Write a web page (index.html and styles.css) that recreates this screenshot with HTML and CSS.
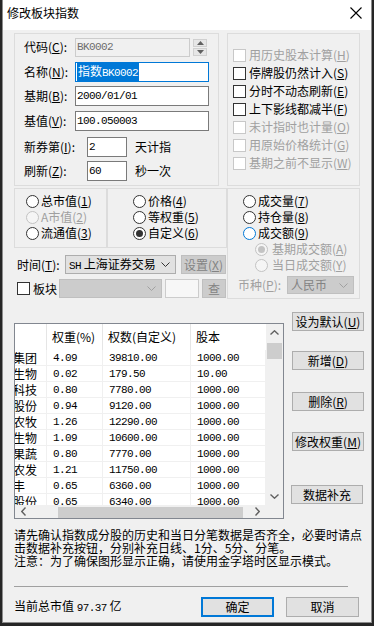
FILE: index.html
```html
<!DOCTYPE html>
<html lang="zh">
<head>
<meta charset="utf-8">
<title>修改板块指数</title>
<link rel="stylesheet" href="styles.css">
</head>
<body>
<div class="dialog">
  <div class="titlebar">
    <span class="title">修改板块指数</span>
    <svg class="close" width="12" height="12" viewBox="0 0 12 12"><path d="M0.5 0.5L11.5 11.5M11.5 0.5L0.5 11.5" stroke="#000" stroke-width="1.1" fill="none"/></svg>
  </div>
  <div class="content">
    <div class="row1">
      <div class="group gl">
        <div class="frow">
          <span class="lbl lw51">代码(<u>C</u>):</span>
          <span class="edit disabled mono ew115">BK0002</span>
          <span class="spin">
            <span class="spin-btn"><svg width="7" height="4" viewBox="0 0 7 4"><path d="M0 4L3.5 0L7 4Z" fill="#606060"/></svg></span>
            <span class="spin-btn"><svg width="7" height="4" viewBox="0 0 7 4"><path d="M0 0L3.5 4L7 0Z" fill="#606060"/></svg></span>
          </span>
        </div>
        <div class="frow m5">
          <span class="lbl lw51">名称(<u>N</u>):</span>
          <span class="edit focus ew134"><span class="sel">指数<span class="mono">BK0002</span></span></span>
        </div>
        <div class="frow m4">
          <span class="lbl lw51">基期(<u>B</u>):</span>
          <span class="edit mono ew134">2000/01/01</span>
        </div>
        <div class="frow m5">
          <span class="lbl lw51">基值(<u>V</u>):</span>
          <span class="edit mono ew134">100.050003</span>
        </div>
        <div class="frow m6">
          <span class="lbl lw63">新券第(<u>I</u>):</span>
          <span class="edit mono ew40">2</span>
          <span class="suffix">天计指</span>
        </div>
        <div class="frow m4">
          <span class="lbl lw63">刷新(<u>Z</u>):</span>
          <span class="edit mono ew40">60</span>
          <span class="suffix">秒一次</span>
        </div>
      </div>
      <div class="group gr">
        <div class="chk dis"><span class="box"></span><span>用历史股本计算(<u>H</u>)</span></div>
        <div class="chk"><span class="box"></span><span>停牌股仍然计入(<u>S</u>)</span></div>
        <div class="chk"><span class="box"></span><span>分时不动态刷新(<u>E</u>)</span></div>
        <div class="chk"><span class="box"></span><span>上下影线都减半(<u>F</u>)</span></div>
        <div class="chk dis"><span class="box"></span><span>未计指时也计量(<u>O</u>)</span></div>
        <div class="chk dis"><span class="box"></span><span>用原始价格统计(<u>G</u>)</span></div>
        <div class="chk dis"><span class="box"></span><span>基期之前不显示(<u>W</u>)</span></div>
      </div>
    </div>

    <div class="row2">
      <div class="left2">
        <div class="grp-row">
          <div class="group g1">
            <div class="rad"><span class="dot"></span><span>总市值(<u>1</u>)</span></div>
            <div class="rad dis"><span class="dot"></span><span>A市值(<u>2</u>)</span></div>
            <div class="rad"><span class="dot"></span><span>流通值(<u>3</u>)</span></div>
          </div>
          <div class="group g2">
            <div class="rad"><span class="dot"></span><span>价格(<u>4</u>)</span></div>
            <div class="rad"><span class="dot"></span><span>等权重(<u>5</u>)</span></div>
            <div class="rad on"><span class="dot"></span><span>自定义(<u>6</u>)</span></div>
          </div>
        </div>
        <div class="trow t-time">
          <span class="lbl lw48">时间(<u>T</u>):</span>
          <span class="combo cw111"><span class="ctext"><span class="mono">SH</span> 上海证券交易</span><svg class="chev" width="9" height="5" viewBox="0 0 9 5"><path d="M0.5 0.5L4.5 4.5L8.5 0.5" stroke="#333" fill="none"/></svg></span>
          <span class="btn btn-dis bw45">设置(<u>X</u>)</span>
        </div>
        <div class="trow t-block">
          <span class="box"></span>
          <span class="blk-lbl">板块</span>
          <span class="combo combo-dis cw103"><span class="ctext"></span><svg class="chev" width="9" height="5" viewBox="0 0 9 5"><path d="M0.5 0.5L4.5 4.5L8.5 0.5" stroke="#a0a0a0" fill="none"/></svg></span>
          <span class="edit edit-dis ew34"></span>
          <span class="btn btn-dis bw24">查</span>
        </div>
      </div>
      <div class="group g3">
        <div class="rad"><span class="dot"></span><span>成交量(<u>7</u>)</span></div>
        <div class="rad"><span class="dot"></span><span>持仓量(<u>8</u>)</span></div>
        <div class="rad hot"><span class="dot"></span><span>成交额(<u>9</u>)</span></div>
        <div class="rad sub dis on"><span class="dot"></span><span>基期成交额(<u>A</u>)</span></div>
        <div class="rad sub dis"><span class="dot"></span><span>当日成交额(<u>Y</u>)</span></div>
        <div class="cur-row">
          <span class="cur-lbl">币种(<u>P</u>):</span>
          <span class="combo combo-dis cw67"><span class="ctext">人民币</span><svg class="chev" width="9" height="5" viewBox="0 0 9 5"><path d="M0.5 0.5L4.5 4.5L8.5 0.5" stroke="#a0a0a0" fill="none"/></svg></span>
        </div>
      </div>
    </div>

    <div class="row3">
      <div class="list">
        <div class="viewport">
          <div class="lhead">
            <span class="c0"></span>
            <span class="c1">权重(%)</span>
            <span class="c2">权数(自定义)</span>
            <span class="c3">股本</span>
          </div>
          <div class="lrow"><span class="c0"><i>集团</i></span><span class="c1 mono">4.09</span><span class="c2 mono">39810.00</span><span class="c3 mono">1000.00</span></div>
          <div class="lrow"><span class="c0"><i>生物</i></span><span class="c1 mono">0.02</span><span class="c2 mono">179.50</span><span class="c3 mono">10.00</span></div>
          <div class="lrow"><span class="c0"><i>科技</i></span><span class="c1 mono">0.80</span><span class="c2 mono">7780.00</span><span class="c3 mono">1000.00</span></div>
          <div class="lrow"><span class="c0"><i>股份</i></span><span class="c1 mono">0.94</span><span class="c2 mono">9120.00</span><span class="c3 mono">1000.00</span></div>
          <div class="lrow"><span class="c0"><i>农牧</i></span><span class="c1 mono">1.26</span><span class="c2 mono">12290.00</span><span class="c3 mono">1000.00</span></div>
          <div class="lrow"><span class="c0"><i>生物</i></span><span class="c1 mono">1.09</span><span class="c2 mono">10600.00</span><span class="c3 mono">1000.00</span></div>
          <div class="lrow"><span class="c0"><i>果蔬</i></span><span class="c1 mono">0.80</span><span class="c2 mono">7770.00</span><span class="c3 mono">1000.00</span></div>
          <div class="lrow"><span class="c0"><i>农发</i></span><span class="c1 mono">1.21</span><span class="c2 mono">11750.00</span><span class="c3 mono">1000.00</span></div>
          <div class="lrow"><span class="c0"><i>丰</i></span><span class="c1 mono">0.65</span><span class="c2 mono">6360.00</span><span class="c3 mono">1000.00</span></div>
          <div class="lrow"><span class="c0"><i>股份</i></span><span class="c1 mono">0.65</span><span class="c2 mono">6340.00</span><span class="c3 mono">1000.00</span></div>
        </div>
        <div class="vscroll">
          <span class="arrow"><svg width="9" height="5" viewBox="0 0 9 5"><path d="M0.5 4.5L4.5 0.8L8.5 4.5" stroke="#606060" stroke-width="1.4" fill="none"/></svg></span>
          <span class="vthumb"></span>
          <span class="vspace"></span>
          <span class="arrow"><svg width="9" height="5" viewBox="0 0 9 5"><path d="M0.5 0.5L4.5 4.2L8.5 0.5" stroke="#606060" stroke-width="1.4" fill="none"/></svg></span>
        </div>
        <div class="hscroll">
          <span class="harrow"><svg width="5" height="9" viewBox="0 0 5 9"><path d="M4.5 0.5L0.8 4.5L4.5 8.5" stroke="#606060" stroke-width="1.4" fill="none"/></svg></span>
          <span class="hthumb"></span>
          <span class="harrow"><svg width="5" height="9" viewBox="0 0 5 9"><path d="M0.5 0.5L4.2 4.5L0.5 8.5" stroke="#606060" stroke-width="1.4" fill="none"/></svg></span>
        </div>
        <div class="corner"></div>
      </div>
      <div class="sidebtns">
        <span class="btn sb sb1">设为默认(<u>U</u>)</span>
        <span class="btn sb sb2">新增(<u>D</u>)</span>
        <span class="btn sb sb3">删除(<u>R</u>)</span>
        <span class="btn sb sb4">修改权重(<u>M</u>)</span>
        <span class="btn sb sb5">数据补充</span>
      </div>
    </div>

    <p class="note">请先确认指数成分股的历史和当日分笔数据是否齐全，必要时请点击数据补充按钮，分别补充日线、1分、5分、分笔。</p>
    <p class="note2">注意：为了确保图形显示正确，请使用金字塔时区显示模式。</p>

    <div class="sep"></div>

    <div class="bottom">
      <span class="total">当前总市值 <span class="mono">97.37</span> 亿</span>
      <span class="btn okbtn">确定</span>
      <span class="btn cbtn">取消</span>
    </div>
  </div>
</div>
</body>
</html>
```

FILE: styles.css
```css
html, body {
  margin: 0;
  padding: 0;
}
body {
  width: 374px;
  height: 626px;
  overflow: hidden;
  background: #262626;
  font-family: "Noto Sans CJK SC", "Noto Sans", sans-serif;
  font-size: 12px;
  color: #000;
}
u { text-decoration: underline; text-underline-offset: 1px; }
.mono {
  font-family: "Liberation Mono", "Noto Sans CJK SC", monospace;
  font-size: 11px;
  letter-spacing: -0.6px;
}
.dialog {
  margin-left: 2px;
  width: 370px;
  height: 623px;
  box-sizing: border-box;
  background: #f0f0f0;
  border: 1px solid #8c8c8c;
  border-top: none;
}
.titlebar {
  height: 30px;
  background: #fff;
  display: flex;
  align-items: center;
  padding: 0 8px 4px 4px;
  box-sizing: border-box;
}
.title { font-size: 12px; line-height: 14px; flex: 1; }
.close { display: block; margin-right: 1px; }

.content { padding-left: 11px; }

.group {
  border: 1px solid #dcdcdc;
  box-sizing: border-box;
}
.row1 {
  display: flex;
  margin-top: 3px;
}
.gl {
  width: 205px;
  height: 153px;
  padding: 3px 0 0 9px;
}
.gr {
  width: 133px;
  height: 153px;
  margin-left: 8px;
  padding: 12px 0 0 5px;
}
.frow {
  display: flex;
  align-items: center;
  height: 20px;
}
.m4 { margin-top: 4px; }
.m5 { margin-top: 5px; }
.m6 { margin-top: 6px; }
.lbl { display: inline-block; white-space: nowrap; line-height: 14px; }
.lw51 { width: 51px; }
.lw63 { width: 63px; }
.lw48 { width: 48px; }
.edit {
  display: flex;
  align-items: center;
  height: 20px;
  box-sizing: border-box;
  border: 1px solid #7a7a7a;
  background: #fff;
  padding-left: 1px;
  white-space: nowrap;
  overflow: hidden;
}
.edit.disabled {
  border-color: #cccccc;
  background: #f0f0f0;
  color: #6d6d6d;
  height: 19px;
}
.edit.focus { border-color: #0078d7; }
.sel {
  background: #0078d7;
  color: #fff;
  line-height: 15px;
  padding: 0 1px;
}
.ew115 { width: 115px; }
.ew134 { width: 134px; }
.ew40 { width: 40px; }
.ew34 { width: 34px; }
.suffix { margin-left: 8px; line-height: 14px; }
.spin {
  display: flex;
  flex-direction: column;
  margin-left: 3px;
  gap: 1px;
}
.spin-btn {
  width: 14px;
  height: 8px;
  background: #e6e6e6;
  border: 1px solid #d0d0d0;
  box-sizing: border-box;
  display: flex;
  align-items: center;
  justify-content: center;
}
.spin-btn svg { display: block; }

.chk {
  display: flex;
  align-items: center;
  height: 18px;
  gap: 3px;
  white-space: nowrap;
  line-height: 14px;
}
.box {
  width: 13px;
  height: 13px;
  flex: none;
  box-sizing: border-box;
  border: 1px solid #333;
  background: #fff;
}
.chk.dis { color: #a0a0a0; }
.chk.dis .box { border-color: #c8c8c8; }

.row2 {
  display: flex;
  margin-top: 2px;
}
.left2 { width: 213px; }
.grp-row { display: flex; }
.g1 {
  width: 93px;
  height: 60px;
  padding: 4px 0 0 11px;
}
.g2 {
  width: 120px;
  height: 60px;
  padding: 4px 0 0 25px;
}
.g3 {
  width: 133px;
  height: 111px;
  padding: 4px 0 0 15px;
}
.rad {
  display: flex;
  align-items: center;
  height: 16px;
  gap: 2px;
  white-space: nowrap;
  line-height: 14px;
}
.dot {
  width: 13px;
  height: 13px;
  flex: none;
  box-sizing: border-box;
  border: 1px solid #333;
  border-radius: 50%;
  background: #fff;
  display: flex;
  align-items: center;
  justify-content: center;
}
.rad.on .dot::after {
  content: "";
  width: 7px;
  height: 7px;
  border-radius: 50%;
  background: #333;
}
.rad.dis { color: #a0a0a0; }
.rad.dis .dot { border-color: #c3c3c3; background: #f5f5f5; }
.rad.dis.on .dot::after { background: #c3c3c3; }
.rad.hot .dot { border-color: #0078d7; }
.rad.sub { margin-left: 12px; gap: 4px; }
.cur-row {
  display: flex;
  align-items: center;
  margin: 3px 0 0 -5px;
  height: 18px;
}
.cur-lbl { color: #a0a0a0; width: 49px; white-space: nowrap; line-height: 14px; }

.trow {
  display: flex;
  align-items: center;
  height: 19px;
  padding-left: 3px;
}
.t-time { margin-top: 7px; }
.t-block { margin-top: 5px; }
.blk-lbl { margin: 0 2px 0 3px; width: 24px; line-height: 14px; }
.combo {
  display: flex;
  align-items: center;
  height: 19px;
  box-sizing: border-box;
  border: 1px solid #adadad;
  background: #e1e1e1;
  padding: 0 5px 0 3px;
  white-space: nowrap;
}
.combo .ctext { flex: 1; min-width: 0; line-height: 14px; white-space: nowrap; }
.chev { display: block; flex: none; }
.combo-dis {
  background: #cccccc;
  border-color: #bfbfbf;
  color: #838383;
}
.cw111 { width: 111px; }
.cw103 { width: 103px; }
.cw67 { width: 67px; height: 18px; }
.edit-dis {
  height: 19px;
  margin-left: 3px;
  border-color: #cccccc;
  background: #f7f7f7;
}

.btn {
  display: flex;
  align-items: center;
  justify-content: center;
  box-sizing: border-box;
  border: 1px solid #adadad;
  background: #e1e1e1;
  white-space: nowrap;
  line-height: 14px;
}
.btn-dis {
  background: #cccccc;
  border-color: #bfbfbf;
  color: #838383;
  height: 19px;
}
.bw45 { width: 45px; margin-left: 5px; }
.bw24 { width: 24px; margin-left: 3px; }

.row3 {
  display: flex;
  margin-top: 13px;
  height: 207px;
}
.list {
  margin-top: 11px;
  width: 270px;
  height: 196px;
  box-sizing: border-box;
  border: 1px solid #828790;
  background: #fff;
  display: grid;
  grid-template-columns: 251px 17px;
  grid-template-rows: 181px 13px;
}
.viewport {
  overflow: hidden;
  background: #fff;
}
.lhead, .lrow {
  display: flex;
  white-space: nowrap;
}
.lhead {
  height: 26px;
  align-items: center;
}
.lhead span {
  height: 26px;
  display: flex;
  align-items: center;
  box-sizing: border-box;
  border-right: 1px solid #e5e5e5;
  padding-left: 5px;
  line-height: 14px;
}
.lrow {
  height: 16px;
  align-items: center;
}
.lrow span {
  height: 16px;
  display: flex;
  align-items: center;
  box-sizing: border-box;
  border-right: 1px solid #f0f0f0;
  border-bottom: 1px solid #f0f0f0;
  padding-left: 6px;
  overflow: hidden;
  line-height: 14px;
}
.c0 { width: 32px; flex: none; }
.c1 { width: 56px; flex: none; }
.c2 { width: 88px; flex: none; }
.c3 { width: 75px; flex: none; }
.lhead .c3 { border-right: none; }
.lrow .c0 { padding-left: 0; }
.lrow .c0 i {
  font-style: normal;
  margin-left: -2px;
  line-height: 14px;
}
.vscroll {
  background: #f0f0f0;
  display: flex;
  flex-direction: column;
  align-items: center;
}
.arrow {
  height: 17px;
  width: 17px;
  display: flex;
  align-items: center;
  justify-content: center;
  flex: none;
}
.vthumb {
  width: 15px;
  height: 16px;
  margin-top: 2px;
  background: #cdcdcd;
  flex: none;
}
.vspace { flex: 1; }
.hscroll {
  background: #f0f0f0;
  display: flex;
  align-items: center;
}
.harrow {
  width: 17px;
  height: 13px;
  display: flex;
  align-items: center;
  justify-content: center;
  flex: none;
}
.hthumb {
  margin-left: 26px;
  width: 185px;
  height: 11px;
  margin-top: 2px;
  background: #cdcdcd;
}
.hscroll .harrow:last-child { margin-left: auto; }
.corner { background: #f0f0f0; }

.sidebtns {
  margin-left: 8px;
  display: flex;
  flex-direction: column;
}
.sb { width: 72px; height: 19px; }
.sb2 { margin-top: 20px; }
.sb3 { margin-top: 22px; }
.sb4 { margin-top: 21px; }
.sb5 { margin-top: 34px; margin-left: -1px; }

.note, .note2 {
  margin: 0;
  width: 348px;
  line-height: 13px;
  white-space: normal;
}
.note { margin-top: 9px; height: 26px; }
.note2 { height: 13px; }

.sep {
  margin-top: 19px;
  width: 334px;
  height: 1px;
  background: #a0a0a0;
}
.bottom {
  margin-top: 10px;
  display: flex;
  align-items: center;
  height: 20px;
  width: 345px;
}
.total { flex: 1; white-space: nowrap; line-height: 14px; }
.okbtn {
  width: 73px;
  height: 20px;
  border: 2px solid #0078d7;
}
.cbtn {
  width: 73px;
  height: 20px;
  margin-left: 12px;
}
```
